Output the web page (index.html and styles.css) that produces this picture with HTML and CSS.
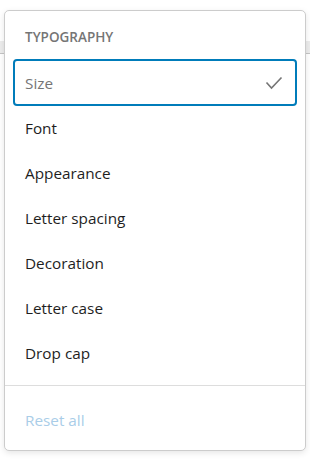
FILE: index.html
```html
<!DOCTYPE html>
<html>
<head>
<meta charset="utf-8">
<link rel="stylesheet" href="styles.css">
</head>
<body>
<div class="backdrop"></div>
<div class="popover">
  <div class="group">
    <div class="heading">Typography</div>
    <div class="item selected">
      <span class="label">Size</span>
      <svg class="check" width="18" height="14" viewBox="0 0 18 14"><polyline points="1.5,6.5 6.5,12 16.5,1.5" fill="none" stroke="#757575" stroke-width="1.6"/></svg>
    </div>
    <div class="item"><span class="label">Font</span></div>
    <div class="item"><span class="label">Appearance</span></div>
    <div class="item"><span class="label">Letter spacing</span></div>
    <div class="item"><span class="label">Decoration</span></div>
    <div class="item"><span class="label">Letter case</span></div>
    <div class="item"><span class="label">Drop cap</span></div>
  </div>
  <div class="group reset">
    <div class="item disabled"><span class="label">Reset all</span></div>
  </div>
</div>
</body>
</html>
```

FILE: styles.css
```css
html, body {
  margin: 0;
  padding: 0;
  background: #ffffff;
  font-family: "Open Sans", "Noto Sans", sans-serif;
}
body {
  position: relative;
  width: 310px;
  height: 462px;
  overflow: hidden;
}
.backdrop {
  position: absolute;
  left: 0;
  right: 0;
  top: 41px;
  height: 12px;
  background: #ececec;
  border-bottom: 1px solid #c4c4c4;
}
.popover {
  position: absolute;
  left: 4px;
  top: 10px;
  width: 302px;
  box-sizing: border-box;
  background: #fff;
  border: 1px solid #cccccc;
  border-radius: 5px;
  box-shadow: 0 2px 6px rgba(0, 0, 0, 0.1);
}
.group {
  padding: 8px 9px 10px;
}
.group + .group {
  border-top: 1px solid #dddddd;
  padding: 11px 9px 8px;
}
.heading {
  padding: 8px 11px 13px;
  font-size: 13.5px;
  line-height: 20px;
  font-weight: 600;
  text-transform: uppercase;
  color: #757575;
}
.item {
  height: 45px;
  display: flex;
  align-items: center;
  justify-content: space-between;
  padding: 0 11px;
  font-size: 15.3px;
  color: #1e1e1e;
  border-radius: 3px;
}
.item.selected {
  outline: 2px solid #007cba;
  outline-offset: -1px;
  color: #757575;
}
.check {
  margin-right: 2px;
  display: block;
}
.item.disabled {
  color: #a9cde8;
}
```
